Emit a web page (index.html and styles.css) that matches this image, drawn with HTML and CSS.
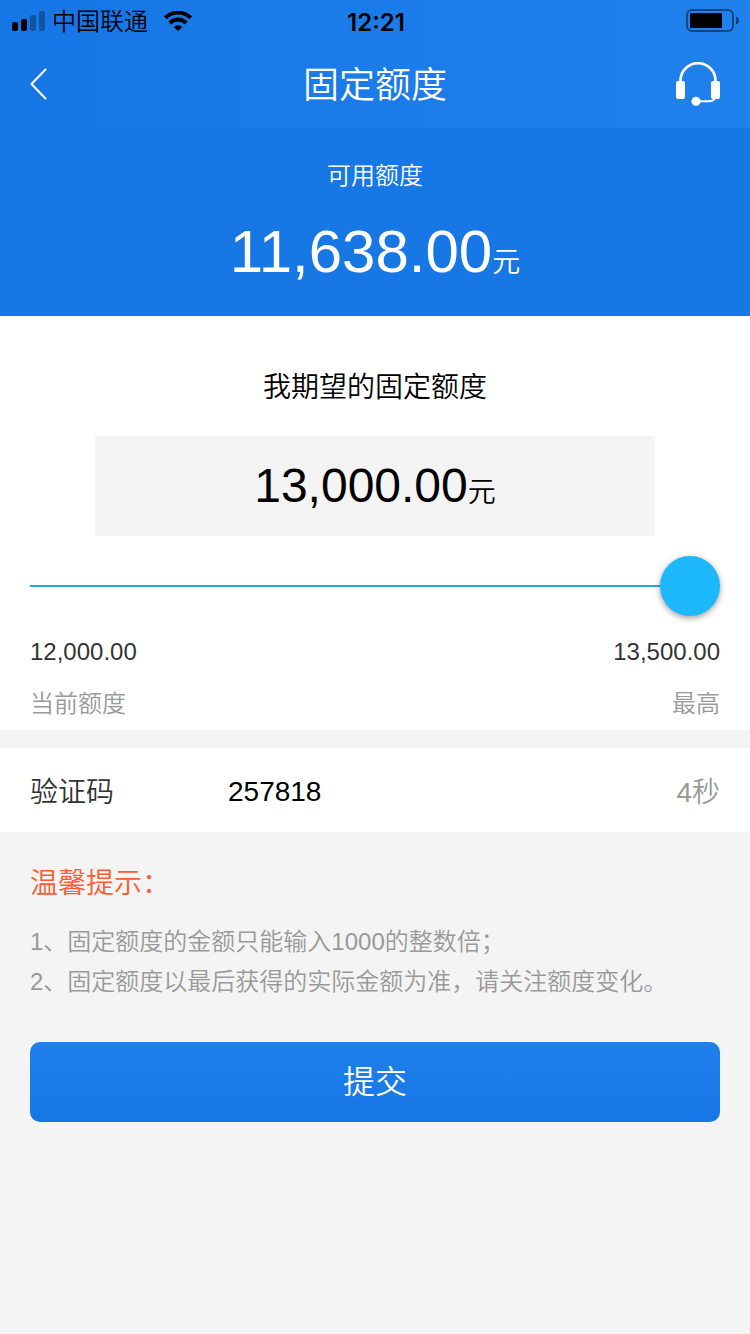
FILE: index.html
```html
<!DOCTYPE html>
<html lang="zh-CN">
<head>
<meta charset="utf-8">
<meta name="viewport" content="width=device-width, initial-scale=1">
<title>固定额度</title>
<link rel="stylesheet" href="styles.css">
</head>
<body>
<header class="top">
  <div class="status">
    <div class="status-left">
      <svg class="signal" width="34" height="20" viewBox="0 0 34 20" aria-hidden="true">
        <rect x="0" y="11" width="6" height="9" rx="2"/>
        <rect x="9" y="8" width="6" height="12" rx="2"/>
        <g opacity=".28"><rect x="18" y="4" width="6" height="16" rx="2"/><rect x="27" y="0" width="6" height="20" rx="2"/></g>
      </svg>
      <span class="carrier">中国联通</span>
      <svg class="wifi" width="28" height="20" viewBox="0 0 28 20" aria-hidden="true">
        <g fill="none" stroke="#000" stroke-width="4">
          <path d="M1.300 6.800a18 18 0 0 1 25.400 0"/>
          <path d="M5.800 12a11.600 11.600 0 0 1 16.400 0"/>
        </g>
        <path d="M14 20l-4.400-4a6.200 6.200 0 0 1 8.800 0z"/>
      </svg>
    </div>
    <time class="clock">12:21</time>
    <div class="status-right">
      <svg width="54" height="24" viewBox="0 0 54 24" aria-hidden="true">
        <rect x="1" y="1" width="46" height="21" rx="5" fill="none" stroke="#000" stroke-opacity=".45" stroke-width="2"/>
        <rect x="4" y="4" width="32" height="15" rx="1"/>
        <path d="M50 7.500q3 1 3 4t-3 4z" fill-opacity=".5"/>
      </svg>
    </div>
  </div>
  <nav class="nav">
    <button class="icon-button" type="button" aria-label="返回">
      <svg width="18" height="32" viewBox="0 0 18 32" aria-hidden="true"><path d="M15.500 1.500L1.500 16l14 14.500" fill="none" stroke="#fff" stroke-width="2" stroke-linecap="round" stroke-linejoin="round"/></svg>
    </button>
    <h1 class="title">固定额度</h1>
    <button class="icon-button icon-button-end" type="button" aria-label="客服">
      <svg width="44" height="44" viewBox="0 0 44 44" fill="#fff" aria-hidden="true">
        <path d="M4.500 20v-1.500a17.500 17.300 0 0 1 35 0V20" fill="none" stroke="#fff" stroke-width="2.600"/>
        <rect x="0" y="19" width="9" height="18" rx="2"/>
        <rect x="35" y="19" width="9" height="18" rx="2"/>
        <path d="M39 36q-1.500 3.200-6 3.200H20" fill="none" stroke="#fff" stroke-width="2"/>
        <circle cx="20" cy="39.300" r="4.600"/>
      </svg>
    </button>
  </nav>
</header>
<main>
  <section class="available">
    <p class="available-label">可用额度</p>
    <p class="available-amount">11,638.00<span class="unit">元</span></p>
  </section>
  <form class="form">
    <section class="wish">
      <label class="wish-label" for="quota">我期望的固定额度</label>
      <output class="wish-amount" for="quota">13,000.00<span class="unit">元</span></output>
      <input class="slider" id="quota" type="range" min="12000" max="13500" value="13500">
      <div class="range-row range-values"><span>12,000.00</span><span>13,500.00</span></div>
      <div class="range-row range-names"><span>当前额度</span><span>最高</span></div>
    </section>
    <section class="code">
      <label class="code-label" for="code">验证码</label>
      <input class="code-input" id="code" type="text" inputmode="numeric" value="257818">
      <span class="countdown">4秒</span>
    </section>
    <section class="tips">
      <h2 class="tips-title">温馨提示：</h2>
      <p class="tip">1、固定额度的金额只能输入1000的整数倍；</p>
      <p class="tip">2、固定额度以最后获得的实际金额为准，请关注额度变化。</p>
    </section>
    <button class="submit" type="button">提交</button>
  </form>
</main>
</body>
</html>
```
FILE: styles.css
```css
* { box-sizing: border-box; }
body {
  margin: 0;
  min-height: 100vh;
  background: #f4f4f4;
  color: #333;
  font-family: "Liberation Sans", "Noto Sans CJK SC", sans-serif;
  font-size: 24px;
  font-weight: 350;
}
h1, h2, p { margin: 0; font-weight: inherit; }
button, input { font: inherit; border: 0; padding: 0; background: none; }
svg { display: block; }

.top { background: linear-gradient(90deg, #1676e5, #2080ec); }
.status {
  display: grid;
  grid-template-columns: 1fr auto 1fr;
  align-items: center;
  height: 40px;
  padding: 0 10px 0 12px;
  color: #000;
}
.status-left { display: flex; align-items: center; }
.carrier { margin: 0 16px 0 6px; padding-top: 2px; line-height: 40px; }
.clock { padding-top: 2px; font-family: Inter, sans-serif; font-size: 24px; font-weight: 600; }
.status-right { display: flex; justify-content: flex-end; }

.nav {
  display: grid;
  grid-template-columns: 1fr auto 1fr;
  align-items: center;
  height: 88px;
  padding: 0 30px;
}
.icon-button { justify-self: start; cursor: pointer; }
.icon-button-end { justify-self: end; }
.title { padding-top: 4px; color: #fff; font-size: 36px; line-height: 48px; }

.available {
  padding: 28px 30px 24px;
  background: #1677e5;
  color: #fff;
  text-align: center;
}
.available-label { line-height: 40px; }
.available-amount { margin-top: 16px; font-size: 60px; line-height: 80px; }
.unit { font-size: 28px; line-height: 1; }

.wish {
  display: flex;
  flex-direction: column;
  padding: 52px 30px 6px;
  background: #fff;
}
.wish-label { color: #000; font-size: 28px; line-height: 40px; text-align: center; }
.wish-amount {
  align-self: center;
  width: 560px;
  max-width: 100%;
  margin: 28px 0 20px;
  background: #f4f4f4;
  color: #000;
  font-size: 48px;
  line-height: 100px;
  text-align: center;
}
.slider {
  -webkit-appearance: none;
  appearance: none;
  width: 100%;
  height: 60px;
  margin: 0;
  background: linear-gradient(#2aa3ee, #2aa3ee) center / 100% 2px no-repeat;
}
.slider::-webkit-slider-thumb {
  -webkit-appearance: none;
  width: 60px;
  height: 60px;
  border-radius: 50%;
  background: #1cb8fb;
  box-shadow: 0 2px 6px rgba(0, 0, 0, .4);
}
.range-row { display: flex; justify-content: space-between; line-height: 40px; }
.range-values { margin: 16px 0 12px; }
.range-names { color: #999; }

.code {
  display: flex;
  align-items: center;
  height: 84px;
  margin-top: 18px;
  padding: 0 30px;
  background: #fff;
  font-size: 28px;
}
.code-label { flex: 0 0 198px; }
.code-input { flex: 1; min-width: 0; height: 84px; padding-top: 4px; color: #000; outline: 0; }
.countdown { color: #999; }

.tips { padding: 32px 30px 0; color: #999; }
.tips-title { margin-bottom: 18px; color: #ff5a35; font-size: 28px; line-height: 40px; }
.tip { line-height: 40px; }

.submit {
  display: block;
  width: calc(100% - 60px);
  height: 80px;
  margin: 40px 30px;
  padding-bottom: 6px;
  border-radius: 10px;
  background: linear-gradient(#1f80ec, #1676e5);
  color: #fff;
  font-size: 32px;
  cursor: pointer;
}
```
